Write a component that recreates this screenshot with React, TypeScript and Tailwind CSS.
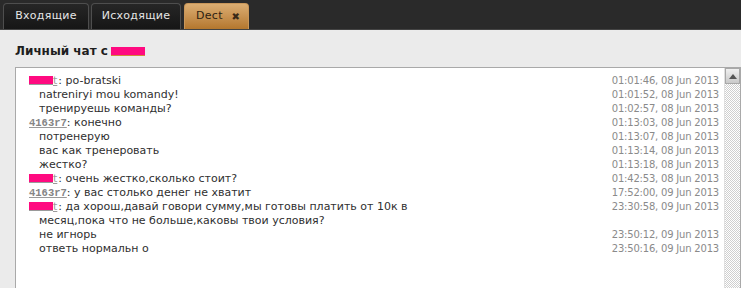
import React from 'react'

type Row = { name?: 'peer' | 'me'; text: string; time: string }

const rows: Row[] = [
  { name: 'peer', text: 'po-bratski', time: '01:01:46, 08 Jun 2013' },
  { text: 'natreniryi mou komandy!', time: '01:01:52, 08 Jun 2013' },
  { text: 'тренируешь команды?', time: '01:02:57, 08 Jun 2013' },
  { name: 'me', text: 'конечно', time: '01:13:03, 08 Jun 2013' },
  { text: 'потренерую', time: '01:13:07, 08 Jun 2013' },
  { text: 'вас как тренеровать', time: '01:13:14, 08 Jun 2013' },
  { text: 'жестко?', time: '01:13:18, 08 Jun 2013' },
  { name: 'peer', text: 'очень жестко,сколько стоит?', time: '01:42:53, 08 Jun 2013' },
  { name: 'me', text: 'у вас столько денег не хватит', time: '17:52:00, 09 Jun 2013' },
  {
    name: 'peer',
    text: 'да хорош,давай говори сумму,мы готовы платить от 10к в месяц,пока что не больше,каковы твои условия?',
    time: '23:30:58, 09 Jun 2013',
  },
  { text: 'не игнорь', time: '23:50:12, 09 Jun 2013' },
  { text: 'ответь нормальн о', time: '23:50:16, 09 Jun 2013' },
]

function Author({ who }: { who: 'peer' | 'me' }) {
  if (who === 'me') {
    return (
      <span className="font-['Liberation_Mono',monospace] font-bold text-[10.5px] text-[#858585] underline decoration-[#9a9a9a]">
        4163r7
      </span>
    )
  }
  // the name is blanked out with a pink block, only its last letter shows
  return (
    <span className="text-[#9a9a9a] underline decoration-[#9a9a9a] mr-[1px]">
      <span className="inline-block indent-0 w-[24px] h-[9px] bg-[#ff0a80] border-b border-[#9a9a9a] align-[-1px]" />
      t
    </span>
  )
}

function Tab({ label, width, active }: { label: string; width: string; active?: boolean }) {
  if (active) {
    return (
      <div className={`${width} h-[26px] rounded-t-[4px] border border-b-0 border-[#c9975a] bg-gradient-to-b from-[#dcae72] to-[#b4772d] flex items-center pl-[11px] pr-[8px] justify-between text-[#2e2212]`}>
        <span className="tracking-[0.3px]">{label}</span>
        <span className="text-[10px] font-bold text-[#3a2a18]">✖</span>
      </div>
    )
  }
  return (
    <div className={`${width} h-[26px] rounded-t-[4px] border border-b-0 border-[#4e4e4e] bg-gradient-to-b from-[#262626] to-[#161616] flex items-center justify-center text-[#e6e6e6] tracking-[0.3px]`}>
      {label}
    </div>
  )
}

export default function App() {
  return (
    <div className="w-[741px] h-[288px] overflow-hidden bg-[#ebebeb] font-['DejaVu_Sans',sans-serif]">
      <div className="h-[30px] bg-[#2a2a2a] flex items-end pl-[3px] text-[11px] border-b border-[#444]">
        <Tab label="Входящие" width="w-[86px]" />
        <div className="w-[2px]" />
        <Tab label="Исходящие" width="w-[90px]" />
        <div className="w-[3px]" />
        <Tab label="Dect" width="w-[65px]" active />
      </div>

      <div className="pl-[15px]">
        <h2 className="pt-[13px] text-[12px] leading-[16px] font-bold text-[#1e1e1e] flex items-center gap-[3px]">
          Личный чат с
          <span className="inline-block w-[34px] h-[9px] bg-[#ff0a80] border-b border-[#d08a3a]" />
        </h2>

        <div className="mt-[8px] h-[230px] bg-white border border-[#a9a9a9] flex">
          <div className="flex-1 pt-[6px] pl-[13px] pr-[5px] text-[11px] leading-[14px]">
            {rows.map((r, i) => (
              <div key={i} className="flex items-start">
                <div
                  className={
                    r.name
                      ? 'w-[402px] pl-[10px] -indent-[10px] text-[#2f2f2f]'
                      : 'w-[402px] pl-[10px] text-[#2f2f2f]'
                  }
                >
                  {r.name && <Author who={r.name} />}
                  {r.name ? ': ' + r.text : r.text}
                </div>
                <div className="flex-1 text-right text-[10px] tracking-[-0.2px] text-[#8a8a8a]">{r.time}</div>
              </div>
            ))}
          </div>

          <div className="w-[16px] flex flex-col border-l border-[#e0e0e0]">
            <div className="h-[16px] border border-[#a8a8a8] bg-gradient-to-b from-[#f0f0f0] to-[#c9c9c9] flex items-center justify-center">
              <svg width="8" height="5" viewBox="0 0 8 5">
                <path d="M0 5 L4 0 L8 5 Z" fill="#555" />
              </svg>
            </div>
            <div className="flex-1 bg-[repeating-conic-gradient(#cfcfcf_0%_25%,#ffffff_0%_50%)] bg-[length:2px_2px]" />
          </div>
        </div>
      </div>
    </div>
  )
}
